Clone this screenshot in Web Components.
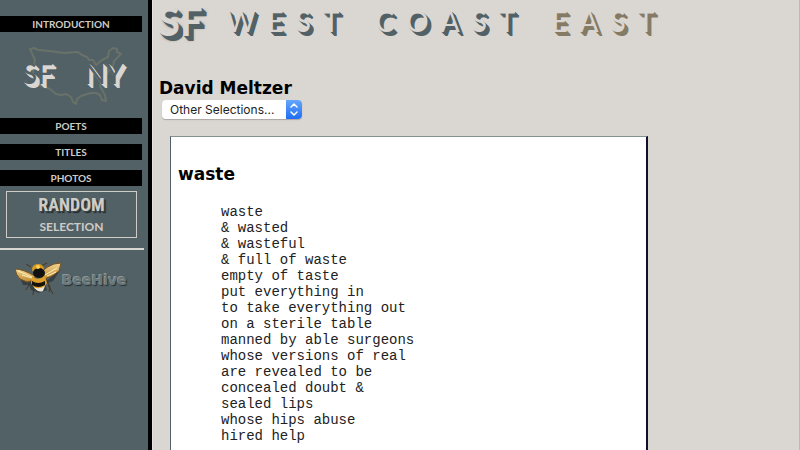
<!DOCTYPE html>
<html lang="en">
<head>
<meta charset="utf-8">
<title>David Meltzer</title>
<style>
body {
    margin: 0;
    background: #dad6d2;
    color: #000;
    font-family: "DejaVu Sans", Verdana, sans-serif;
}
</style>
</head>
<body>
<poetry-page>
    <side-bar slot="side"></side-bar>
    <site-banner></site-banner>
    <poet-header name="David Meltzer"></poet-header>
    <poem-sheet name="waste">waste
&amp; wasted
&amp; wasteful
&amp; full of waste
empty of taste
put everything in
to take everything out
on a sterile table
manned by able surgeons
whose versions of real
are revealed to be
concealed doubt &amp;
sealed lips
whose hips abuse
hired help</poem-sheet>
</poetry-page>

<script>
class PoetryPage extends HTMLElement {
    constructor() {
        super();
        this.attachShadow({ mode: 'open' }).innerHTML = `
        <style>
        :host {
            display: grid;
            grid-template-columns: 152px 1fr;
            height: 100vh;
            overflow: hidden;
            box-sizing: border-box;
            border-right: 1px solid #bdb9ae;
        }
        main {
            min-width: 0;
            border-left: 1px solid #e6e2de;
        }
        </style>
        <slot name="side"></slot>
        <main><slot></slot></main>`;
    }
}
customElements.define('poetry-page', PoetryPage);

class NavBar extends HTMLElement {
    constructor() {
        super();
        this.attachShadow({ mode: 'open' }).innerHTML = `
        <style>
        :host { display: block; margin-right: 6px; }
        a {
            display: block;
            background: #000;
            color: #cfccc6;
            font: 700 10px/16px Lato, sans-serif;
            text-align: center;
            text-decoration: none;
        }
        a:hover { color: #fff; }
        </style>
        <a href="#"><slot></slot></a>`;
    }
}
customElements.define('nav-bar', NavBar);

class CoastMap extends HTMLElement {
    constructor() {
        super();
        this.attachShadow({ mode: 'open' }).innerHTML = `
        <style>
        :host { display: grid; height: 86px; }
        svg, .ends { grid-area: 1 / 1; }
        .ends {
            display: flex;
            justify-content: space-between;
            align-items: center;
            padding: 0 25px 4px 22px;
            color: #526166;
            font: 400 28px/34px Lato, sans-serif;
            text-shadow: 1px 1px 0 #dad6d2, 2px 2px 0 #dad6d2, 3px 3px 0 #dad6d2, 4px 4px 0 #dad6d2;
        }
        </style>
        <svg width="148" height="86" viewBox="0 32 148 86" aria-hidden="true">
            <path d="M30 49l4-1 4 2 12 1 14 2 14-1 4 3 5 2 2 3 4 0 3 5 6-5 6-3 1-6 4-3 4 1 0 3 4 2-4 4-3 3-1 5-4 4-3 6-4 4-2 6 2 4 3 5 1 6-4-1-2-5-4-2-5 0-4 1-6 2-4 3-1 5-3-2-2-5-5-3-5 1-5-1-6-5-6-2-7-3-4-7 0-8 2-9z"
                fill="none" stroke="#697269" stroke-width="2" stroke-linejoin="round"/>
        </svg>
        <div class="ends"><span>SF</span><span>NY</span></div>`;
    }
}
customElements.define('coast-map', CoastMap);

class RandomLink extends HTMLElement {
    constructor() {
        super();
        this.attachShadow({ mode: 'open' }).innerHTML = `
        <style>
        :host { display: block; margin: 5px 11px 0 6px; }
        a {
            display: block;
            border: 1px solid #cfccc6;
            height: 45px;
            color: #cfccc6;
            text-align: center;
            text-decoration: none;
        }
        .top {
            display: block;
            font: bold 18px/26px "Liberation Sans Narrow", "Roboto Condensed", sans-serif;
            text-shadow: 1px 1px 0 #39464a, 2px 2px 1px #20282a;
        }
        .low {
            display: block;
            font: 700 12px/18px Lato, sans-serif;
        }
        </style>
        <a href="#"><span class="top">RANDOM</span><span class="low">SELECTION</span></a>`;
    }
}
customElements.define('random-link', RandomLink);

class BeeHive extends HTMLElement {
    constructor() {
        super();
        this.attachShadow({ mode: 'open' }).innerHTML = `
        <style>
        :host { display: block; }
        a {
            display: flex;
            align-items: center;
            margin: 11px 0 0 14px;
            color: #69777a;
            font: bold 14px/20px "DejaVu Sans", sans-serif;
            text-decoration: none;
            text-shadow: -1px -1px 0 #8b9695, 1px 1px 1px #263134;
        }
        </style>
        <a href="#">
            <svg width="48" height="38" viewBox="0 0 48 38" aria-hidden="true">
                <defs>
                    <linearGradient id="wing" x1="0" y1="0" x2="0" y2="1">
                        <stop offset="0" stop-color="#f2d795"/>
                        <stop offset="1" stop-color="#bd842b"/>
                    </linearGradient>
                </defs>
                <path d="M4 13l14 9 12 0 17-14-8 12-8 3 2 6-8 3-8-3-2-5-6 0z" fill="#182023" opacity=".5"/>
                <path d="M17 6l-5-3M27 5l6-3M17 20l-5 9M20 24l-1 10M32 18l4 8-1 5M34 24l5 9" fill="none" stroke="#49351b" stroke-width="1"/>
                <path d="M1 8q8 0 20 7l0 4-8 2-7-3Q2 14 1 8z" fill="url(#wing)" stroke="#73501f"/>
                <path d="M28 10q6-5 12-7l7-1-2 8-7 5-10 4z" fill="url(#wing)" stroke="#73501f"/>
                <path d="M4 10l14 6M8 14l10 3M31 14l12-7M33 15l9-4" stroke="#fff0ba" stroke-width="1"/>
                <ellipse cx="24" cy="8" rx="6" ry="5" fill="#d39a25"/>
                <ellipse cx="25" cy="12" rx="6" ry="5" fill="#111"/>
                <path d="M18 16q7 4 13-1l2 7-5 7-7-1-4-6z" fill="#dca02b"/>
                <path d="M18 20q6 4 13 0v4q-7 4-13 0z" fill="#17120d"/>
                <path d="M20 26q5 3 11-1l-2 5q-5 2-9-4z" fill="#eee6d5"/>
                <circle cx="24" cy="6" r="2" fill="#ffcf4e"/>
            </svg>
            <span>BeeHive</span>
        </a>`;
    }
}
customElements.define('bee-hive', BeeHive);

class SideBar extends HTMLElement {
    constructor() {
        super();
        this.attachShadow({ mode: 'open' }).innerHTML = `
        <style>
        :host {
            display: block;
            box-sizing: border-box;
            background: #526166;
            border-right: 4px solid #000;
            padding-top: 16px;
        }
        .list { display: grid; gap: 10px; }
        hr {
            height: 2px;
            margin: 10px 4px 0 0;
            border: 0;
            background: #dad6d2;
        }
        </style>
        <nav>
            <nav-bar>INTRODUCTION</nav-bar>
            <coast-map></coast-map>
            <div class="list">
                <nav-bar>POETS</nav-bar>
                <nav-bar>TITLES</nav-bar>
                <nav-bar>PHOTOS</nav-bar>
            </div>
            <random-link></random-link>
            <hr>
            <bee-hive></bee-hive>
        </nav>`;
    }
}
customElements.define('side-bar', SideBar);

class SiteBanner extends HTMLElement {
    constructor() {
        super();
        const word = (text, cls) => `<span class="word ${cls}">` +
            [...text].map(c => `<span>${c}</span>`).join('') + '</span>';
        this.attachShadow({ mode: 'open' }).innerHTML = `
        <style>
        :host {
            display: flex;
            gap: 24px;
            height: 46px;
            padding-left: 5px;
            color: #dad6d2;
            font-family: Lato, sans-serif;
            font-weight: 400;
            line-height: 42px;
        }
        /* thin face in the page colour, the letter shows as its shadow */
        .logo {
            font-size: 40px;
            font-weight: 700;
            text-shadow: 1px 1px 0 #526166, 2px 2px 0 #526166, 3px 3px 0 #526166,
                4px 4px 0 #526166, 5px 5px 0 #526166, 4px 4px 3px #857b65;
        }
        .words { display: flex; gap: 36px; font-size: 28px; }
        .word { display: flex; gap: 12px; }
        .west { text-shadow: 1px 1px 0 #526166, 2px 2px 0 #526166, 3px 3px 0 #526166, 4px 4px 0 #526166; }
        .east { text-shadow: 1px 1px 0 #857b65, 2px 2px 0 #857b65, 3px 3px 0 #857b65, 4px 4px 0 #857b65; }
        </style>
        <span class="logo">SF</span>
        <span class="words">${word('WEST', 'west')}${word('COAST', 'west')}${word('EAST', 'east')}</span>`;
    }
}
customElements.define('site-banner', SiteBanner);

class PoetHeader extends HTMLElement {
    constructor() {
        super();
        this.attachShadow({ mode: 'open' }).innerHTML = `
        <style>
        :host { display: block; padding: 30px 0 0 6px; }
        h1 { margin: 0; font-size: 17px; line-height: 24px; }
        .pick {
            display: grid;
            grid-template-columns: 100%;
            width: 140px;
            margin-left: 3px;
            border-radius: 4px;
            overflow: hidden;
            box-shadow: 0 1px 1px #aaa6a3;
        }
        select, svg { grid-area: 1 / 1; }
        select {
            appearance: none;
            height: 19px;
            padding: 0 16px 0 8px;
            border: 0;
            background: #fff;
            color: #222;
            font: 12px/19px Inter, sans-serif;
        }
        svg { justify-self: end; pointer-events: none; }
        </style>
        <h1></h1>
        <div class="pick">
            <select aria-label="Other Selections"><option>Other Selections...</option></select>
            <svg width="16" height="19" viewBox="0 0 16 19" aria-hidden="true">
                <defs>
                    <linearGradient id="blue" x1="0" y1="0" x2="0" y2="1">
                        <stop offset="0" stop-color="#64a7fb"/>
                        <stop offset="1" stop-color="#1f6df6"/>
                    </linearGradient>
                </defs>
                <path d="M0 0h16v19H0z" fill="url(#blue)"/>
                <path d="M5 7l3-3 3 3M5 12l3 3 3-3" fill="none" stroke="#fff" stroke-width="1.5" stroke-linecap="round" stroke-linejoin="round"/>
            </svg>
        </div>`;
    }

    connectedCallback() {
        this.shadowRoot.querySelector('h1').textContent = this.getAttribute('name');
    }
}
customElements.define('poet-header', PoetHeader);

class PoemSheet extends HTMLElement {
    constructor() {
        super();
        this.attachShadow({ mode: 'open' }).innerHTML = `
        <style>
        :host {
            display: block;
            box-sizing: border-box;
            width: 74%;
            min-height: 100vh;
            margin: 17px 0 0 17px;
            padding: 25px 7px;
            background: #fff;
            border: 1px solid #526166;
            border-top-color: #839290;
            border-right: 2px solid #11102b;
        }
        h2 { margin: 0; font-size: 17px; line-height: 24px; }
        pre {
            margin: 18px 0 0 43px;
            font: 14px/16px "Liberation Mono", monospace;
            color: #222;
        }
        </style>
        <h2></h2>
        <pre><slot></slot></pre>`;
    }

    connectedCallback() {
        this.shadowRoot.querySelector('h2').textContent = this.getAttribute('name');
    }
}
customElements.define('poem-sheet', PoemSheet);
</script>
</body>
</html>
